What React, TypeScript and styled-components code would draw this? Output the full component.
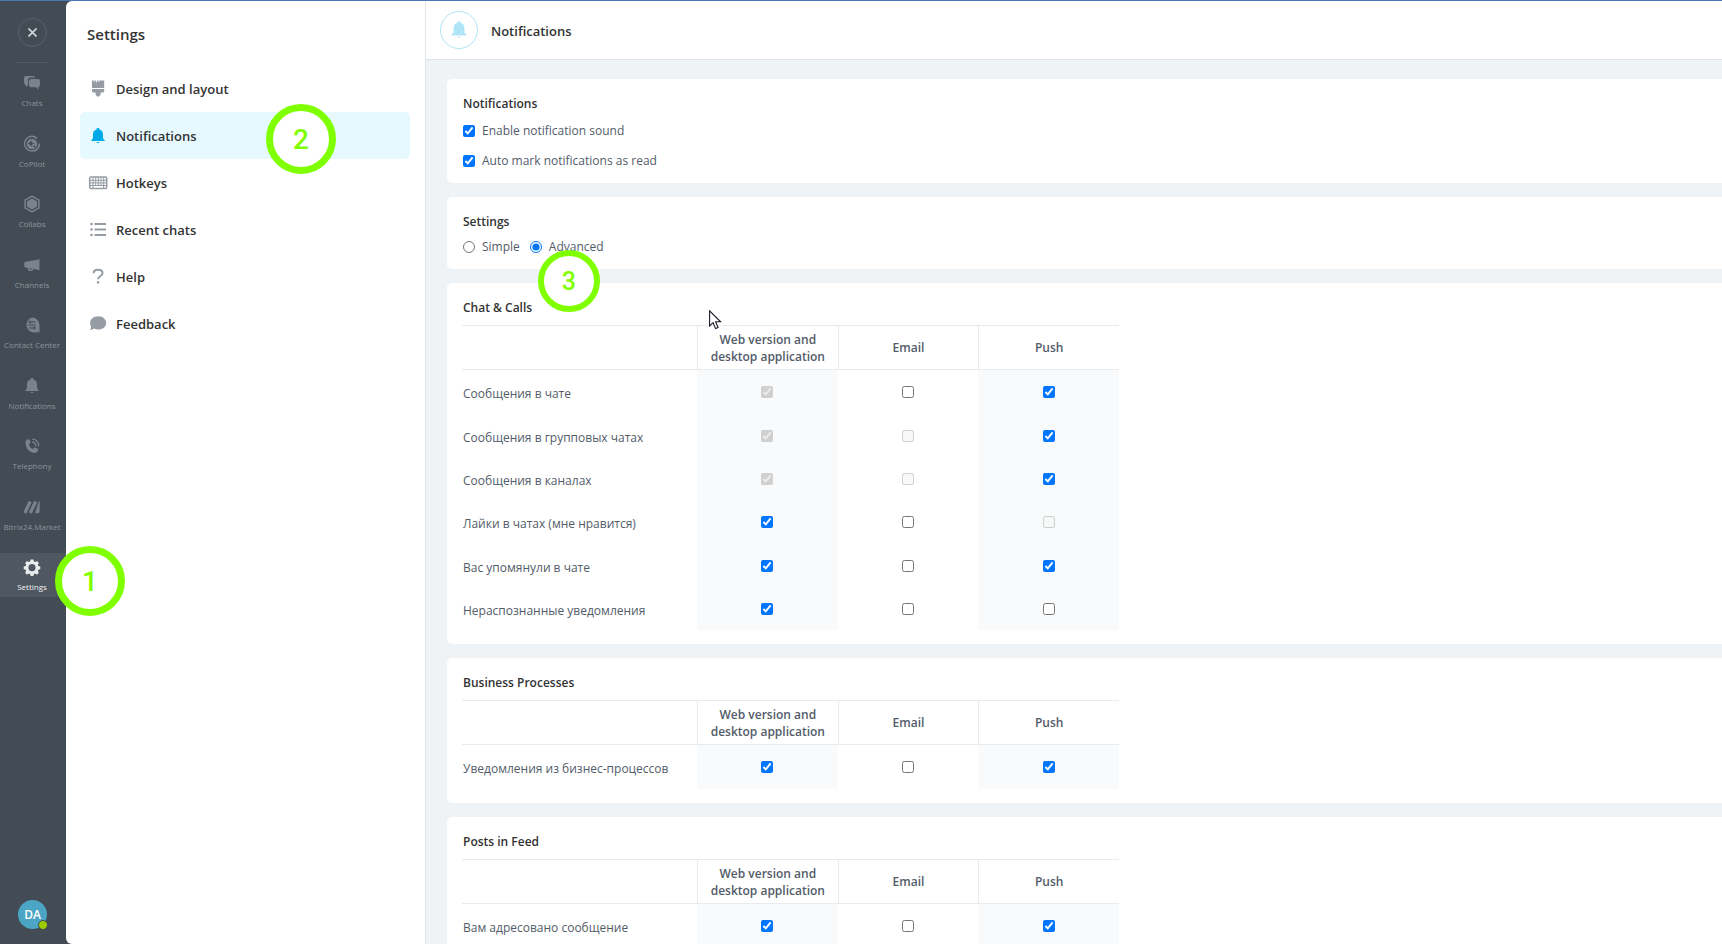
import React from "react";
import styled, { createGlobalStyle } from "styled-components";

const GlobalStyle = createGlobalStyle`
  * { box-sizing: border-box; }
  body {
    margin: 0;
    background: #eff3f6;
    color: #525c69;
    font-family: "Open Sans", "Noto Sans", sans-serif;
    font-size: 12px;
    line-height: 17px;
  }
  button { font: inherit; color: inherit; background: none; border: 0; padding: 0; cursor: pointer; }
  h1, h2, ul, p { margin: 0; padding: 0; }
`;

const BAR = "#434b55";
const LINE = "#e8eaec";

const Page = styled.div`
  display: flex;
  height: 100vh;
  border-top: 1px solid #4a78b4;
  background: ${BAR};
`;

const Rail = styled.aside`
  position: relative;
  z-index: 2;
  display: flex;
  flex-direction: column;
  align-items: center;
  width: 66px;
  flex: none;
  padding: 17px 0 15px;
`;

const CloseButton = styled.button`
  display: flex;
  align-items: center;
  justify-content: center;
  width: 29px;
  height: 29px;
  margin-right: 1px;
  border: 1px solid #5a626c;
  border-radius: 50%;
`;

const RailDivider = styled.div`
  width: 34px;
  height: 1px;
  margin: 15px 2px 6px 0;
  background: #535b65;
`;

const RailList = styled.ul`
  width: 100%;
  flex: 1;
  list-style: none;
`;

const RailEntry = styled.li`
  position: relative;
  margin-bottom: 17px;
  &:nth-child(even) { margin-bottom: 16px; }
`;

const RailButton = styled.button<{ $active?: boolean }>`
  display: flex;
  flex-direction: column;
  align-items: center;
  width: 100%;
  height: 44px;
  padding: 3px 2px 0 0;
  font-size: 8px;
  line-height: 18px;
  white-space: nowrap;
  color: ${(p) => (p.$active ? "#f2f3f4" : "#8d949c")};
  background: ${(p) => (p.$active ? "#4f5761" : "transparent")};
  svg { color: ${(p) => (p.$active ? "#e9ebec" : "#7b828b")}; }
`;

const Avatar = styled.button`
  position: relative;
  width: 29px;
  height: 29px;
  margin-right: 1px;
  border-radius: 50%;
  background: #4ba5c5;
  color: #fff;
  font-size: 12px;
  font-weight: 600;
`;

const Presence = styled.span`
  position: absolute;
  right: -1px;
  bottom: -1px;
  width: 10px;
  height: 10px;
  border: 1px solid ${BAR};
  border-radius: 50%;
  background: #9bcc00;
`;

const Panel = styled.nav`
  width: 360px;
  flex: none;
  padding: 20px 15px 0 14px;
  border-right: 1px solid #e3e6e9;
  border-radius: 6px 0 0 6px;
  background: #fff;
`;

const PanelTitle = styled.h1`
  margin: 0 0 18px 7px;
  color: #333;
  font-size: 15px;
  font-weight: 600;
  line-height: 26px;
`;

const MenuList = styled.ul`
  list-style: none;
`;

const MenuEntry = styled.li`
  position: relative;
`;

const MenuButton = styled.button<{ $active?: boolean }>`
  display: flex;
  align-items: center;
  gap: 7px;
  width: 100%;
  height: 47px;
  padding: 0 7px;
  border-radius: 5px;
  background: ${(p) => (p.$active ? "#e5f9ff" : "transparent")};
  color: #333;
  font-size: 13px;
  font-weight: 600;
  svg { color: ${(p) => (p.$active ? "#00a9e8" : "#959ca4")}; }
`;

const MenuLabel = styled.span`
  padding-top: 2px;
`;

const Content = styled.div`
  display: flex;
  flex-direction: column;
  flex: 1;
  min-width: 0;
  background: #eff3f6;
`;

const ContentHeader = styled.header`
  display: flex;
  align-items: center;
  gap: 13px;
  height: 59px;
  flex: none;
  padding-left: 14px;
  border-bottom: 1px solid #e0e4e8;
  background: #fff;
`;

const HeaderIcon = styled.div`
  display: flex;
  align-items: center;
  justify-content: center;
  width: 38px;
  height: 38px;
  border: 1px solid #aee6f7;
  border-radius: 50%;
  color: #afe5f7;
`;

const HeaderTitle = styled.h2`
  padding-top: 2px;
  color: #333;
  font-size: 13px;
  font-weight: 600;
`;

const Cards = styled.main`
  display: flex;
  flex-direction: column;
  gap: 14px;
  flex: 1;
  min-height: 0;
  padding: 19px 0 0 21px;
  overflow-y: auto;
  scrollbar-width: none;
`;

const Card = styled.section`
  flex: none;
  padding: 16px 16px 14px;
  border-radius: 5px 0 0 5px;
  background: #fff;
`;

const CardTitle = styled.h2`
  color: #333;
  font-size: 12px;
  font-weight: 600;
  line-height: 17px;
`;

const OptionColumn = styled.div`
  display: flex;
  flex-direction: column;
  gap: 13px;
  padding-top: 10px;
`;

const OptionRow = styled.div`
  display: flex;
  gap: 10px;
  padding-top: 8px;
`;

const Option = styled.label`
  position: relative;
  display: flex;
  align-items: center;
  gap: 7px;
`;

const Tick = styled.input`
  display: block;
  width: 12px;
  height: 12px;
  margin: 0;
`;

const Matrix = styled.table`
  width: 657px;
  max-width: 100%;
  margin-left: -1px;
  margin-top: 9px;
  table-layout: fixed;
  border-collapse: separate;
  border-spacing: 0;
`;

const HeadCell = styled.th`
  height: 45px;
  padding: 0 8px;
  border: solid ${LINE};
  border-width: 1px 0 1px 1px;
  font-weight: 600;
  text-align: center;
  &:first-child { width: 235px; border-left: 0; }
`;

const BodyRow = styled.tr`
  height: 43px;
  &:nth-child(3n + 1) { height: 44px; }
`;

const RowName = styled.th`
  padding: 3px 0 0 1px;
  font-weight: 400;
  text-align: left;
  white-space: nowrap;
`;

const TickCell = styled.td<{ $shaded?: boolean }>`
  padding: 0;
  background: ${(p) => (p.$shaded ? "#f8fafc" : "#fff")};
  ${Tick} { margin: 0 auto; }
`;

const Marker = styled.span<{ $x: number; $y: number; $small?: boolean }>`
  position: absolute;
  z-index: 3;
  left: ${(p) => p.$x}px;
  top: ${(p) => p.$y}px;
  display: flex;
  align-items: center;
  justify-content: center;
  width: ${(p) => (p.$small ? 62 : 70)}px;
  height: ${(p) => (p.$small ? 62 : 70)}px;
  border: ${(p) => (p.$small ? 6 : 7)}px solid #80ff00;
  border-radius: 50%;
  background: #fff;
  color: #80ff00;
  font-family: Roboto, sans-serif;
  font-size: ${(p) => (p.$small ? 25 : 28)}px;
  font-weight: 500;
  pointer-events: none;
`;

const Pointer = styled.svg`
  position: absolute;
  z-index: 4;
  left: 709px;
  top: 310px;
`;

/* ---------- icons ---------- */

const Glyph = ({ size = 22, children }: { size?: number; children: React.ReactNode }) => (
  <svg width={size} height={size} viewBox="0 0 22 22" fill="currentColor" aria-hidden="true">
    {children}
  </svg>
);

const bellPath =
  "M11 3c-.9 0-1.500.6-1.500 1.400C7.200 5 6 6.900 6 9.200v3.200c0 .8-.3 1.400-.9 2L4.300 15.200v.9h13.400v-.9l-.8-.8c-.6-.6-.9-1.200-.9-2V9.200c0-2.300-1.200-4.200-3.500-4.800C12.500 3.600 11.900 3 11 3zM9.200 17.100a1.900 1.500 0 0 0 3.600 0z";

const ChatsIcon = (
  <Glyph>
    <path d="M5 4h7.500a2 2 0 0 1 1.900 1.500H10a3 3 0 0 0-3 3v4.700L4.800 15v-2.300A2 2 0 0 1 3 10.700V6a2 2 0 0 1 2-2z" />
    <path d="M10 7h6.800a2.200 2.200 0 0 1 2.200 2.200v3.900a2.200 2.200 0 0 1-1.700 2.100v2.500L15 15.300h-5A2.200 2.200 0 0 1 7.900 13.100V9.200A2.200 2.200 0 0 1 10 7z" />
  </Glyph>
);
const CopilotIcon = (
  <Glyph>
    <path d="M15.500 4.800A7.400 7.400 0 1 0 18.400 11" fill="none" stroke="currentColor" strokeWidth="1.500" strokeLinecap="round" />
    <path d="M18.300 12a7.400 7.400 0 0 1-5 6.200M13 3.800a7.400 7.400 0 0 1 3 1.700" fill="none" stroke="currentColor" strokeWidth="1.200" />
    <circle cx="11" cy="11" r="5.200" />
    <path d="M10 7.200l1 2.300 2.300 1-2.300 1-1 2.300-1-2.300-2.300-1 2.300-1zM13.300 11.700l.5 1.200 1.200.5-1.200.5-.5 1.200-.5-1.200-1.200-.5 1.200-.5z" fill={BAR} />
  </Glyph>
);
const CollabsIcon = (
  <Glyph>
    <path d="M11 3.200l6.900 3.900v7.800L11 18.800l-6.900-3.900V7.100z" fill="none" stroke="currentColor" strokeWidth="1.500" strokeLinejoin="round" />
    <path d="M11 6l4.500 2.500v5L11 16l-4.500-2.500v-5z" stroke="currentColor" strokeLinejoin="round" />
  </Glyph>
);
const ChannelsIcon = (
  <Glyph>
    <path d="M18.500 5.200v11L12.800 15a2.700 2.700 0 0 1-2.400 1.900H8.500a1.800 1.800 0 0 1-1.700-1.800v-1.200L3.300 13V8zM8.300 14.200v.7c0 .4.300.7.700.7h1.200c.6 0 1-.3 1.200-.8z" fillRule="evenodd" />
  </Glyph>
);
const ContactIcon = (
  <Glyph>
    <path d="M11 3.500a7.500 7.500 0 0 1 7.500 7.500v7.200H15.300A7.500 7.500 0 1 1 11 3.500z" />
    <path d="M7.400 8h7M7.400 11h7M8 14h6.800M9 6.600v2.800M13.300 12.600v2.800" stroke={BAR} strokeWidth="1.200" fill="none" />
  </Glyph>
);
const BellIcon = (
  <Glyph><path d={bellPath} /></Glyph>
);
const PhoneIcon = (
  <Glyph>
    <path d="M6.500 4.300l2 .1 1 3.400-1.600 1.700c.6 2 2 3.600 4 4.400l1.600-1.500 3.300 1.100.3 2c-.8 2-2.700 2.900-4.900 2.300C8 16.700 5.200 13.500 4.600 9c-.3-2.200.4-3.900 1.900-4.700z" />
    <path d="M11.400 7a3.700 3.700 0 0 1 3.400 4M11.700 4.200a6.300 6.300 0 0 1 6 6.600" fill="none" stroke="currentColor" strokeWidth="1.300" strokeLinecap="round" />
  </Glyph>
);
const MarketIcon = (
  <Glyph>
    <path d="M3.800 17L9.200 5.500M9.300 17L14.700 5.500" fill="none" stroke="currentColor" strokeWidth="3.200" />
    <path d="M18.600 4.600v10.800c0 1-.7 1.800-1.700 1.800h-2.900L17 7.500z" />
  </Glyph>
);
const GearIcon = (
  <Glyph>
    <path
      fillRule="evenodd"
      d="M9.600 3.500h2.800l.5 2 1.200.5 1.800-1.100 2 2-1.100 1.800.5 1.200 2 .5v2.800l-2 .5-.5 1.200 1.100 1.800-2 2-1.800-1.100-1.200.5-.5 2H9.600l-.5-2-1.200-.5-1.800 1.100-2-2 1.100-1.800-.5-1.200-2-.5v-2.800l2-.5.5-1.200-1.100-1.800 2-2 1.800 1.100 1.200-.5zM11 8a3.600 3.600 0 1 0 0 7.200A3.600 3.600 0 0 0 11 8z"
    />
  </Glyph>
);

const BrushIcon = (
  <Glyph>
    <path d="M5 2.500h2.200v1.300h.8V2.500h1.200v2h.9v-2h1.300v1.300h.8V2.500H17.200v7.400H5zM5 10.900h12.200v2c0 1-.6 1.600-1.600 1.600h-2v2.300L11.900 18.500h-1.600l-1.700-1.700v-2.300h-2c-1 0-1.600-.6-1.600-1.600z" />
  </Glyph>
);
const KeyboardIcon = (
  <Glyph>
    <rect x="2.700" y="5" width="17" height="11.500" rx="1.300" fill="none" stroke="currentColor" strokeWidth="1.500" />
    <path d="M3 8.300h16.500M3 10.900h16.500M3 13.500h16.500M6 5v8.500M8.700 5v8.500M11.300 5v8.500M14 5v8.500M16.700 5v8.500M6 13.500v3M16.700 13.500v3" stroke="currentColor" strokeWidth="1" fill="none" />
  </Glyph>
);
const ListIcon = (
  <Glyph>
    <path d="M7.500 5H19M7.500 10.500H19M7.500 16H19" stroke="currentColor" strokeWidth="1.800" />
    <circle cx="4.500" cy="5" r="1.300" /><circle cx="4.500" cy="10.500" r="1.300" /><circle cx="4.500" cy="16" r="1.300" />
  </Glyph>
);
const QuestionIcon = (
  <Glyph>
    <path d="M6.600 7.200C6.600 4.800 8.300 3.700 11 3.700s4.600 1.200 4.600 3.400c0 3-4.500 3-4.500 6.200" fill="none" stroke="currentColor" strokeWidth="1.900" />
    <rect x="9.900" y="15.200" width="2.300" height="2.300" />
  </Glyph>
);
const BubbleIcon = (
  <Glyph>
    <path d="M11.200 3.300c4.500 0 8 2.900 8 6.600s-3.500 6.600-8 6.600c-1.500 0-3-.3-4.200-.9-1.100.9-2.500 1.500-4 1.500.8-.8 1.200-1.900 1.200-3.200-.7-1.100-1.100-2.500-1.100-4 0-3.700 3.600-6.600 8.100-6.600z" />
  </Glyph>
);

/* ---------- data ---------- */

const railItems = [
  { name: "Chats", icon: ChatsIcon },
  { name: "CoPilot", icon: CopilotIcon },
  { name: "Collabs", icon: CollabsIcon },
  { name: "Channels", icon: ChannelsIcon },
  { name: "Contact Center", icon: ContactIcon },
  { name: "Notifications", icon: BellIcon },
  { name: "Telephony", icon: PhoneIcon },
  { name: "Bitrix24.Market", icon: MarketIcon },
  { name: "Settings", icon: GearIcon },
];

const menuItems = [
  { name: "Design and layout", icon: BrushIcon },
  { name: "Notifications", icon: BellIcon },
  { name: "Hotkeys", icon: KeyboardIcon },
  { name: "Recent chats", icon: ListIcon },
  { name: "Help", icon: QuestionIcon },
  { name: "Feedback", icon: BubbleIcon },
];

type State = "on" | "off" | "lockedOn" | "lockedOff";
type Row = [string, State, State, State];

const groups: { title: string; rows: Row[] }[] = [
  {
    title: "Chat & Calls",
    rows: [
      ["Сообщения в чате", "lockedOn", "off", "on"],
      ["Сообщения в групповых чатах", "lockedOn", "lockedOff", "on"],
      ["Сообщения в каналах", "lockedOn", "lockedOff", "on"],
      ["Лайки в чатах (мне нравится)", "on", "off", "lockedOff"],
      ["Вас упомянули в чате", "on", "off", "on"],
      ["Нераспознанные уведомления", "on", "off", "off"],
    ],
  },
  { title: "Business Processes", rows: [["Уведомления из бизнес-процессов", "on", "off", "on"]] },
  { title: "Posts in Feed", rows: [["Вам адресовано сообщение", "on", "off", "on"]] },
];

const channels = ["Web version and desktop application", "Email", "Push"];

const Group = ({ title, rows }: { title: string; rows: Row[] }) => (
  <Card>
    <CardTitle>{title}</CardTitle>
    <Matrix aria-label={title}>
      <thead>
        <tr>
          <HeadCell />
          {channels.map((c) => <HeadCell key={c} scope="col">{c}</HeadCell>)}
        </tr>
      </thead>
      <tbody>
        {rows.map(([name, ...states]) => (
          <BodyRow key={name}>
            <RowName scope="row">{name}</RowName>
            {states.map((s, i) => (
              <TickCell key={channels[i]} $shaded={i !== 1}>
                <Tick
                  type="checkbox"
                  aria-label={`${name}: ${channels[i]}`}
                  defaultChecked={s === "on" || s === "lockedOn"}
                  disabled={s === "lockedOn" || s === "lockedOff"}
                />
              </TickCell>
            ))}
          </BodyRow>
        ))}
      </tbody>
    </Matrix>
  </Card>
);

export default function App() {
  return (
    <Page>
      <GlobalStyle />
      <Rail>
        <CloseButton aria-label="Close">
          <svg width="9" height="9" viewBox="0 0 9 9" stroke="#d3d6d9" strokeWidth="1.600" aria-hidden="true">
            <path d="M.5.5l8 8M8.500.5l-8 8" />
          </svg>
        </CloseButton>
        <RailDivider />
        <RailList>
          {railItems.map(({ name, icon }) => (
            <RailEntry key={name}>
              <RailButton $active={name === "Settings"}>{icon}{name}</RailButton>
              {name === "Settings" && <Marker $x={55} $y={-7}>1</Marker>}
            </RailEntry>
          ))}
        </RailList>
        <Avatar>DA<Presence /></Avatar>
      </Rail>
      <Panel aria-label="Settings">
        <PanelTitle>Settings</PanelTitle>
        <MenuList>
          {menuItems.map(({ name, icon }) => (
            <MenuEntry key={name}>
              <MenuButton $active={name === "Notifications"}>
                {icon}
                <MenuLabel>{name}</MenuLabel>
              </MenuButton>
              {name === "Notifications" && <Marker $x={186} $y={-8}>2</Marker>}
            </MenuEntry>
          ))}
        </MenuList>
      </Panel>
      <Content>
        <ContentHeader>
          <HeaderIcon><Glyph size={24}><path d={bellPath} /></Glyph></HeaderIcon>
          <HeaderTitle>Notifications</HeaderTitle>
        </ContentHeader>
        <Cards>
          <Card>
            <CardTitle>Notifications</CardTitle>
            <OptionColumn>
              <Option><Tick type="checkbox" defaultChecked />Enable notification sound</Option>
              <Option><Tick type="checkbox" defaultChecked />Auto mark notifications as read</Option>
            </OptionColumn>
          </Card>
          <Card>
            <CardTitle>Settings</CardTitle>
            <OptionRow>
              <Option><Tick type="radio" name="mode" />Simple</Option>
              <Option>
                <Tick type="radio" name="mode" defaultChecked />Advanced
                <Marker $small $x={8} $y={12}>3</Marker>
              </Option>
            </OptionRow>
          </Card>
          {groups.map((g) => <Group key={g.title} {...g} />)}
        </Cards>
      </Content>
      <Pointer width="13" height="20" viewBox="0 0 13 20" aria-hidden="true">
        <path d="M.6.800v15.200l3.500-3.300 2.500 5.900 2.500-1.100-2.500-5.700h5z" fill="#fff" stroke="#1c1c28" strokeWidth="1.100" />
      </Pointer>
    </Page>
  );
}
